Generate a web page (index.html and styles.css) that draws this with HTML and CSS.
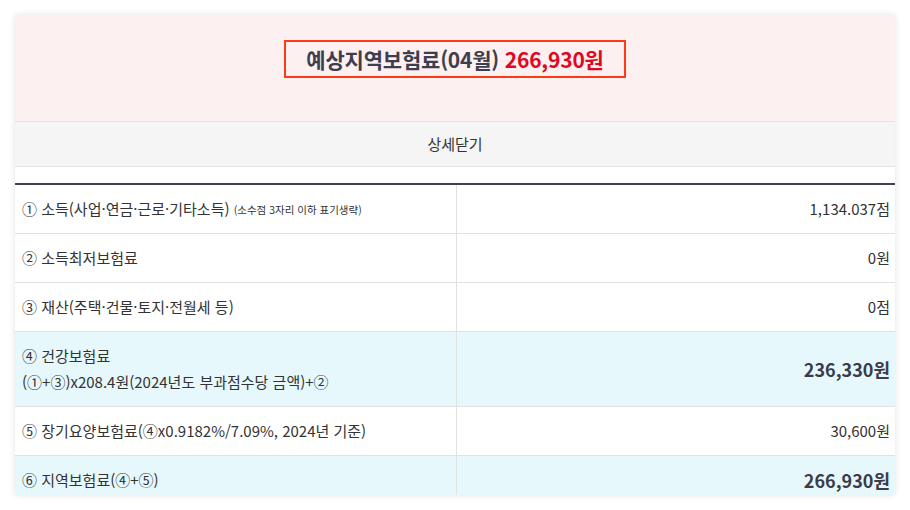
FILE: index.html
```html
<!DOCTYPE html>
<html lang="ko">
<head>
<meta charset="utf-8">
<link rel="stylesheet" href="styles.css">
</head>
<body>
<div class="card">
  <div class="summary">
    <div class="summary-box">예상지역보험료(04월) <span class="red">266,930원</span></div>
  </div>
  <div class="toggle">상세닫기</div>
  <div class="spacer"></div>
  <table class="detail">
    <tr>
      <td class="label">① 소득(사업·연금·근로·기타소득) <span class="note">(소수점 3자리 이하 표기생략)</span></td>
      <td class="value">1,134.037점</td>
    </tr>
    <tr>
      <td class="label">② 소득최저보험료</td>
      <td class="value">0원</td>
    </tr>
    <tr>
      <td class="label">③ 재산(주택·건물·토지·전월세 등)</td>
      <td class="value">0점</td>
    </tr>
    <tr class="hl">
      <td class="label">④ 건강보험료<br>(①+③)x208.4원(2024년도 부과점수당 금액)+②</td>
      <td class="value strong">236,330원</td>
    </tr>
    <tr>
      <td class="label">⑤ 장기요양보험료(④x0.9182%/7.09%, 2024년 기준)</td>
      <td class="value">30,600원</td>
    </tr>
    <tr class="hl">
      <td class="label">⑥ 지역보험료(④+⑤)</td>
      <td class="value strong">266,930원</td>
    </tr>
  </table>
</div>
</body>
</html>
```

FILE: styles.css
```css
* { box-sizing: border-box; }
html, body { margin: 0; padding: 0; background: #fff; }
body {
  padding: 15px;
  font-family: "Noto Sans CJK KR", "Noto Sans", sans-serif;
  color: #333;
}
.card {
  width: 880px;
  height: 480px;
  overflow: hidden;
  background: #fff;
  box-shadow: 0 0 6px rgba(0,0,0,0.12);
}
.summary {
  height: 107px;
  background: #fdf0f0;
  border-bottom: 1px solid #e3e3e3;
  display: flex;
  justify-content: center;
  align-items: flex-start;
  padding-top: 25px;
}
.summary-box {
  border: 2px solid #ff3a16;
  padding: 0 20px;
  height: 38px;
  line-height: 34px;
  font-size: 21px;
  font-weight: 700;
  letter-spacing: -0.2px;
  color: #3d3f4f;
  white-space: nowrap;
}
.red { color: #e0081f; }
.toggle {
  height: 45px;
  background: #f5f5f5;
  border-bottom: 1px solid #e3e3e3;
  text-align: center;
  line-height: 44px;
  font-size: 15px;
  color: #333;
}
.spacer { height: 16px; }
.detail {
  width: 100%;
  border-collapse: collapse;
  border-top: 2px solid #3e4153;
  table-layout: fixed;
}
.detail td {
  height: 49px;
  padding: 11px 5px 11px 7px;
  line-height: 26px;
  font-size: 15px;
  border-bottom: 1px solid #e2e2e2;
  color: #333;
  vertical-align: middle;
}
.detail td.label {
  width: 441px;
  border-right: 1px solid #e2e2e2;
}
.detail td.value { text-align: right; }
.detail td.strong { font-size: 18px; font-weight: 700; color: #3a3c4a; }
.note { font-size: 10.5px; line-height: 1; vertical-align: 1px; }
.hl td { background: #e6f8fc; }
```
